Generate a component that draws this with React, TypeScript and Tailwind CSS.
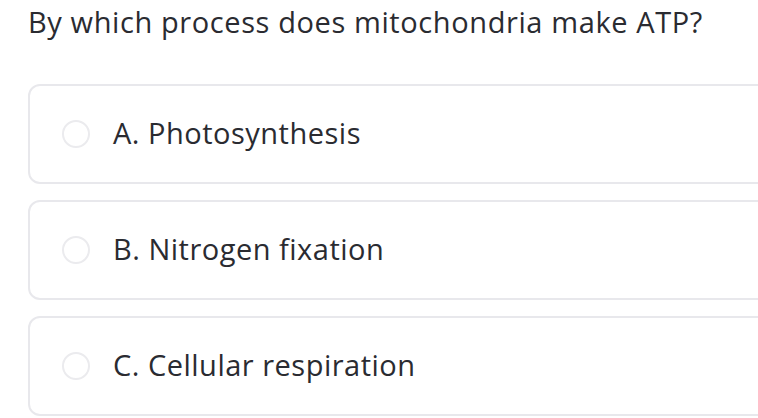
import React from 'react'

const options = ['A. Photosynthesis', 'B. Nitrogen fixation', 'C. Cellular respiration']

export default function App() {
  return (
    <div
      className="w-[758px] h-[418px] overflow-hidden bg-white pl-[28px] pt-[4px] text-[#2a2b31]"
      style={{ fontFamily: '"Open Sans", "Liberation Sans", sans-serif' }}
    >
      {/* Question */}
      <h1 className="text-[29px] leading-[35px] font-normal tracking-[0.6px] whitespace-nowrap">
        By which process does mitochondria make ATP?
      </h1>

      {/* Options */}
      <div className="mt-[45px] flex flex-col gap-[16px]">
        {options.map((opt) => (
          <div
            key={opt}
            className="w-[760px] h-[100px] shrink-0 flex items-center gap-[23px] pl-[32px] border-2 border-[#e8e8ec] rounded-xl bg-white"
          >
            <span className="w-[28px] h-[28px] rounded-full border-2 border-[#ebebee] shrink-0" />
            <span className="text-[29px] leading-[35px] tracking-[0.5px] whitespace-nowrap mb-[4px]">
              {opt}
            </span>
          </div>
        ))}
      </div>
    </div>
  )
}
